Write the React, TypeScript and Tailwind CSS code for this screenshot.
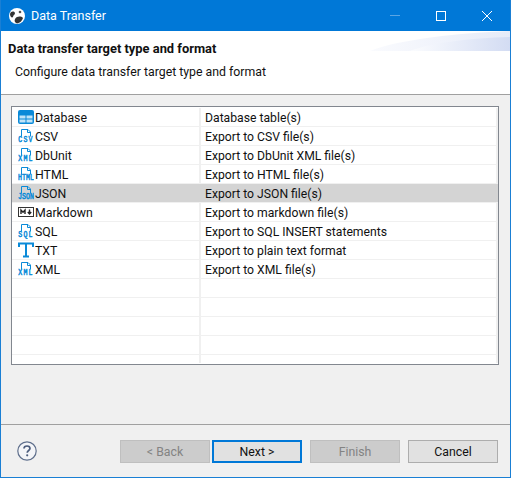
import React from 'react'

const BLUE = '#0a8ad8'

const FileIcon = ({ label }: { label: string }) => (
  <svg width="16" height="16" viewBox="0 0 16 16" className="shrink-0">
    <path d="M3.5 8.5V1.5H10L12.5 4V8.5M9.5 1.5V4.5H12.5" fill="none" stroke={BLUE} strokeWidth="1" />
    <text
      x="8"
      y="10.5"
      transform="scale(1 1.35)"
      textAnchor="middle"
      fontSize="6.6"
      fontFamily="Liberation Mono, monospace"
      fill={BLUE}
      stroke={BLUE}
      strokeWidth="0.4"
      letterSpacing={label.length === 3 ? 1.2 : 0}
    >
      {label}
    </text>
  </svg>
)

const TableIcon = () => (
  <svg width="16" height="16" viewBox="0 0 16 16" className="shrink-0">
    <rect x="0" y="1" width="16" height="14" rx="2" fill={BLUE} />
    <path d="M1.5 6.5h6v3h-6zM8.5 6.5h6v3h-6zM1.5 10.5h6v3h-6zM8.5 10.5h6v3h-6z" fill="#bfe3f7" />
  </svg>
)

const MarkdownIcon = () => (
  <svg width="16" height="16" viewBox="0 0 16 16" className="shrink-0">
    <rect x="0.5" y="3.5" width="15" height="9" fill="#fff" stroke="#333" />
    <path d="M3 10V6L5 8.2L7 6V10" fill="none" stroke="#222" strokeWidth="1.4" />
    <path d="M11.5 5.5V9M9.8 8L11.5 10L13.2 8" fill="none" stroke="#222" strokeWidth="1.4" />
  </svg>
)

const TextIcon = () => (
  <svg width="16" height="16" viewBox="0 0 16 16" className="shrink-0">
    <path d="M1 5V1.5H15V5M8 1.5V14.5M5 14.5H11" fill="none" stroke={BLUE} strokeWidth="2" />
  </svg>
)

const rows: { icon: React.ReactNode; name: string; desc: string }[] = [
  { icon: <TableIcon />, name: 'Database', desc: 'Database table(s)' },
  { icon: <FileIcon label="CSV" />, name: 'CSV', desc: 'Export to CSV file(s)' },
  { icon: <FileIcon label="XML" />, name: 'DbUnit', desc: 'Export to DbUnit XML file(s)' },
  { icon: <FileIcon label="HTML" />, name: 'HTML', desc: 'Export to HTML file(s)' },
  { icon: <FileIcon label="JSON" />, name: 'JSON', desc: 'Export to JSON file(s)' },
  { icon: <MarkdownIcon />, name: 'Markdown', desc: 'Export to markdown file(s)' },
  { icon: <FileIcon label="SQL" />, name: 'SQL', desc: 'Export to SQL INSERT statements' },
  { icon: <TextIcon />, name: 'TXT', desc: 'Export to plain text format' },
  { icon: <FileIcon label="XML" />, name: 'XML', desc: 'Export to XML file(s)' },
  { icon: null, name: '', desc: '' },
  { icon: null, name: '', desc: '' },
  { icon: null, name: '', desc: '' },
  { icon: null, name: '', desc: '' },
]

const Row = ({ icon, name, desc, selected }: { icon: React.ReactNode; name: string; desc: string; selected: boolean }) => (
  <div className={`flex h-[19px] border-b border-[#f0f0f0] ${selected ? 'bg-[#d4d4d4]' : ''}`}>
    <div className="flex w-[187px] items-center gap-[1px] pl-[6px] text-[#111]">
      {icon}
      <span className="pt-[2px]">{name}</span>
    </div>
    <div className={`flex flex-1 items-center border-x-2 pl-[4px] pt-[2px] text-[12.2px] text-[#111] ${selected ? 'border-[#d4d4d4]' : 'border-[#f0f0f0]'}`}>
      {desc}
    </div>
  </div>
)

const Btn = ({ label, disabled, focused }: { label: string; disabled?: boolean; focused?: boolean }) => (
  <button
    className={`flex h-[23px] w-[90px] items-center justify-center pt-[2px] ${
      disabled
        ? 'border border-[#bfbfbf] bg-[#cccccc] text-[#838383]'
        : focused
          ? 'border-2 border-[#0078d7] bg-[#e1e1e1] text-[#111]'
          : 'border border-[#adadad] bg-[#e1e1e1] text-[#111]'
    }`}
  >
    {label}
  </button>
)

export default function App() {
  return (
    <div className="flex h-[478px] w-[511px] flex-col overflow-hidden border-x border-b border-[#1a7fd4] bg-[#f0f0f0] font-['Roboto',sans-serif] text-[12.3px] leading-none">
      <div className="flex h-[31px] shrink-0 items-center bg-[#0078d7] pl-[8px] text-white">
        <svg width="16" height="16" viewBox="0 0 16 16" className="shrink-0">
          <circle cx="8" cy="8" r="8" fill="#fff" />
          <path d="M1 6C2 3 5 3 6 5C6 7 4 7 4 9C3 10 1 9 1 6Z" fill="#333" />
          <path d="M6 11C8 8 12 8 14 10C13 13 11 15 8 15.5C6 15 5 13 6 11Z" fill="#333" />
          <circle cx="11" cy="4" r="1.3" fill="#555" />
        </svg>
        <span className="ml-[6px] pt-px text-[12.5px]">Data Transfer</span>
        <div className="ml-auto flex items-center">
          <div className="flex w-[46px] justify-center">
            <div className="h-px w-[10px] bg-[#5aa5e4]" />
          </div>
          <div className="flex w-[46px] justify-center">
            <div className="size-[10px] border border-white" />
          </div>
          <div className="flex w-[46px] justify-center">
            <svg width="10" height="10" viewBox="0 0 10 10">
              <path d="M0 0L10 10M10 0L0 10" stroke="#fff" strokeWidth="1" />
            </svg>
          </div>
        </div>
      </div>

      <div className="relative h-[64px] shrink-0 border-b border-[#a0a0a0] bg-white pt-[12px] text-[#111]">
        <svg width="140" height="20" viewBox="0 0 140 20" className="absolute right-0 top-0">
          <defs>
            <linearGradient id="fade" x1="0" x2="1" y1="0" y2="0">
              <stop offset="0" stopColor="#fafbfe" />
              <stop offset="1" stopColor="#e6ebf8" />
            </linearGradient>
            <linearGradient id="fade2" x1="0" x2="1" y1="0" y2="0">
              <stop offset="0" stopColor="#fbfcfe" />
              <stop offset="1" stopColor="#d3dcf3" />
            </linearGradient>
          </defs>
          <path d="M0 20C30 8 90 2 140 0V20Z" fill="url(#fade)" />
          <path d="M40 20C60 12 100 7 140 6V20Z" fill="url(#fade2)" />
        </svg>
        <div className="pl-[7px] text-[12.9px] font-bold">Data transfer target type and format</div>
        <div className="mt-[10px] pl-[14px]">Configure data transfer target type and format</div>
      </div>

      <div className="flex-1 px-[10px] pt-[11px]">
        <div className="h-[259px] w-[488px] overflow-hidden border border-[#82878f] bg-white pt-px">
          {rows.map((r, i) => (
            <Row key={i} icon={r.icon} name={r.name} desc={r.desc} selected={i === 4} />
          ))}
          <div className="flex h-[8px]">
            <div className="w-[187px]" />
            <div className="flex-1 border-x-2 border-[#f0f0f0]" />
          </div>
        </div>
      </div>

      <div className="flex h-[53px] shrink-0 items-center border-t border-[#a0a0a0] pl-[16px] pr-[12px]">
        <svg width="20" height="20" viewBox="0 0 20 20" className="shrink-0">
          <circle cx="10" cy="10" r="9.2" fill="#f4f5f8" stroke="#5f6f8c" strokeWidth="1.2" />
          <path d="M7 7.6C7 5.8 8.4 5 10 5C11.8 5 13 6 13 7.5C13 9.5 10.2 9.6 10.2 11.8" fill="none" stroke="#4c5d7d" strokeWidth="1.7" />
          <circle cx="10.2" cy="14.3" r="1.1" fill="#4c5d7d" />
        </svg>
        <div className="ml-auto flex">
          <Btn label="< Back" disabled />
          <div className="w-[2px]" />
          <Btn label="Next >" focused />
          <div className="w-[8px]" />
          <Btn label="Finish" disabled />
          <div className="w-[8px]" />
          <Btn label="Cancel" />
        </div>
      </div>
    </div>
  )
}
